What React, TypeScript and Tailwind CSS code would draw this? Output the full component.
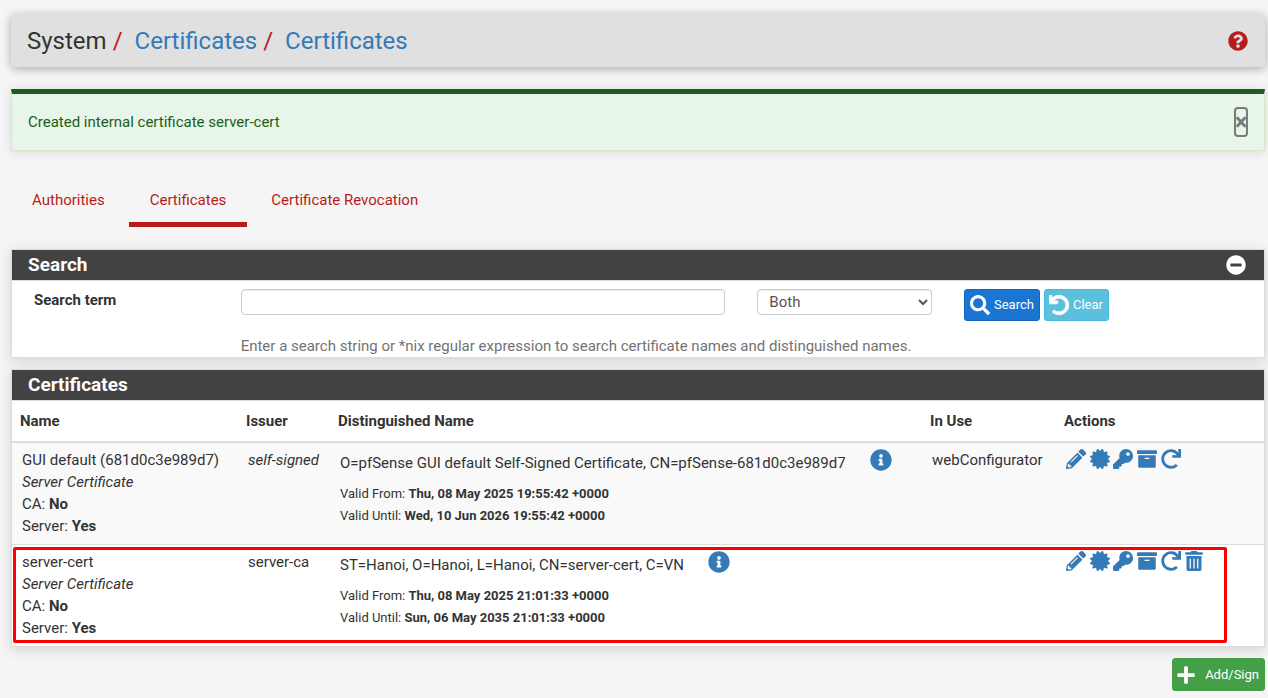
import type { ReactNode } from "react";
import {
  FaArchive,
  FaCertificate,
  FaInfoCircle,
  FaKey,
  FaMinusCircle,
  FaPencilAlt,
  FaPlus,
  FaQuestionCircle,
  FaRedo,
  FaSearch,
  FaTrashAlt,
  FaUndo,
} from "react-icons/fa";

type Certificate = {
  name: string;
  issuer: ReactNode;
  subject: string;
  from: string;
  until: string;
  inUse: string;
  deletable: boolean;
  highlighted: boolean;
};

const certificates: Certificate[] = [
  {
    name: "GUI default (681d0c3e989d7)",
    issuer: <i>self-signed</i>,
    subject: "O=pfSense GUI default Self-Signed Certificate, CN=pfSense-681d0c3e989d7",
    from: "Thu, 08 May 2025 19:55:42 +0000",
    until: "Wed, 10 Jun 2026 19:55:42 +0000",
    inUse: "webConfigurator",
    deletable: false,
    highlighted: false,
  },
  {
    name: "server-cert",
    issuer: "server-ca",
    subject: "ST=Hanoi, O=Hanoi, L=Hanoi, CN=server-cert, C=VN",
    from: "Thu, 08 May 2025 21:01:33 +0000",
    until: "Sun, 06 May 2035 21:01:33 +0000",
    inUse: "",
    deletable: true,
    highlighted: true,
  },
];

function Panel({ title, action, children }: { title: string; action?: ReactNode; children: ReactNode }) {
  return (
    <section className="border border-[#ddd] bg-white shadow-[0_3px_12px_rgba(0,0,0,0.14)]">
      <header className="flex h-[31px] items-center justify-between border-b border-[#ddd] bg-[#424242] pr-[18px] pl-4 text-white">
        <h2 className="text-[19px] leading-[30px] font-bold">{title}</h2>
        {action}
      </header>
      {children}
    </section>
  );
}

function ActionLink({ label, children }: { label: string; children: ReactNode }) {
  return (
    <>
      <a href="#" aria-label={label} className="text-[#337ab7]">
        {children}
      </a>{" "}
    </>
  );
}

function CertificateRow({ cert }: { cert: Certificate }) {
  return (
    <tr className="relative border-b border-[#ddd] align-top last:border-b-0 odd:bg-[#f9f9f9]">
      <td className="pt-[6px] pb-[7px] pl-[10px]">
        {cert.name}
        <br />
        <i>Server Certificate</i>
        <br />
        CA: <b>No</b>
        <br />
        Server: <b>Yes</b>
        {cert.highlighted && (
          <span className="pointer-events-none absolute top-[2px] right-[37px] bottom-[3px] left-px rounded-[2px] border-3 border-[#ff0000]" />
        )}
      </td>
      <td className="pt-[6px] pl-[10px]">{cert.issuer}</td>
      <td className="pt-[6px] pl-[10px]">
        <div className="flex gap-6">
          <span className="leading-7">{cert.subject}</span>
          <a href="#" aria-label="Certificate details" className="text-[#337ab7]">
            <FaInfoCircle size={22} />
          </a>
        </div>
        <div className="mt-[6px] text-[13px] leading-[22px]">
          Valid From: <b>{cert.from}</b>
          <br />
          Valid Until: <b>{cert.until}</b>
        </div>
      </td>
      <td className="pt-[6px] pl-[10px]">{cert.inUse}</td>
      <td className="pt-1 pl-[10px]">
        <ActionLink label="Edit certificate"><FaPencilAlt className="inline h-5 w-5" /></ActionLink>
        <ActionLink label="Export certificate"><FaCertificate className="inline h-5 w-5" /></ActionLink>
        <ActionLink label="Export key"><FaKey className="inline h-5 w-5" /></ActionLink>
        <ActionLink label="Export archive"><FaArchive className="inline h-5 w-5" /></ActionLink>
        <ActionLink label="Renew certificate"><FaRedo className="inline h-5 w-5" /></ActionLink>
        {cert.deletable && (
          <ActionLink label="Delete certificate"><FaTrashAlt className="inline h-5 w-[18px]" /></ActionLink>
        )}
      </td>
    </tr>
  );
}

export default function App() {
  return (
    <div className="min-h-screen bg-[#f5f5f5] pt-[14px] pr-[3px] pb-[7px] pl-[11px] font-[Roboto,sans-serif] text-[15px] leading-[22px] text-[#333]">
      <header className="flex h-[53px] items-center justify-between rounded-[4px] bg-[#e0e0e0] px-4 pr-[17px] shadow-[0_2px_10px_rgba(0,0,0,0.3)]">
        <nav aria-label="Breadcrumb">
          <ol className="flex text-[24px] leading-8">
            <li>System</li>
            <li className="flex gap-3 pl-[6px]">
              <span className="text-[#b71c1c]">/</span>
              <a href="#" className="text-[#337ab7]">Certificates</a>
            </li>
            <li className="flex gap-3 pl-[6px]">
              <span className="text-[#b71c1c]">/</span>
              <a href="#" className="text-[#337ab7]">Certificates</a>
            </li>
          </ol>
        </nav>
        <a href="#" aria-label="Help" className="text-[#b71c1c]">
          <FaQuestionCircle size={20} />
        </a>
      </header>

      <div
        role="alert"
        className="mt-[22px] flex h-[62px] items-center justify-between border border-t-5 border-[#d6e9c6] border-t-[#1b5e20] bg-[#e8f5e9] px-4 text-[#1b5e20] shadow-[0_1px_10px_rgba(0,0,0,0.12)]"
      >
        <span>Created internal certificate server-cert</span>
        <button
          type="button"
          aria-label="Close"
          className="flex h-[30px] w-[14px] items-center justify-center rounded-[4px] border-2 border-[#757d76] text-[23px] leading-none font-bold text-[#757d76]"
        >
          ×
        </button>
      </div>

      <nav aria-label="Certificate sections" className="mt-[22px] flex gap-[3px] text-[#b71c1c]">
        <a href="#" className="border-b-5 border-transparent px-[21px] pt-[16px] pb-[11px]">Authorities</a>
        <a href="#" aria-current="page" className="border-b-5 border-[#b71c1c] px-[21px] pt-[16px] pb-[11px]">Certificates</a>
        <a href="#" className="border-b-5 border-transparent px-[21px] pt-[16px] pb-[11px]">Certificate Revocation</a>
      </nav>

      <main className="mt-[22px] flex flex-col gap-[11px]">
        <Panel
          title="Search"
          action={
            <button type="button" aria-label="Collapse search">
              <FaMinusCircle size={20} />
            </button>
          }
        >
          <form className="grid grid-cols-12 px-[6px] pt-2">
            <label htmlFor="term" className="col-span-2 px-4 font-bold">Search term</label>
            <div className="col-span-5 px-4">
              <input
                id="term"
                type="text"
                aria-describedby="term-help"
                className="block h-[26px] w-full rounded-[4px] border border-[#ccc] bg-white px-3 shadow-[inset_0_1px_1px_rgba(0,0,0,0.075)]"
              />
            </div>
            <div className="col-span-2 px-4">
              <select
                aria-label="Search in"
                defaultValue="Both"
                className="block h-[26px] w-full rounded-[4px] border border-[#ccc] bg-white pl-[7px] text-[#555] shadow-[inset_0_1px_1px_rgba(0,0,0,0.075)]"
              >
                <option>Name</option>
                <option>Distinguished Name</option>
                <option>Both</option>
              </select>
            </div>
            <div className="col-span-3 flex gap-1 px-4 text-[13px] text-white">
              <button type="button" className="flex h-8 items-center gap-1 rounded-[3px] border border-[#1565c0] bg-[#1976d2] px-[5px]">
                <FaSearch size={20} />
                Search
              </button>
              <button type="button" className="flex h-8 items-center gap-1 rounded-[3px] border border-[#46b8da] bg-[#5bc0de] pr-[5px] pl-1">
                <FaUndo size={20} strokeWidth={24} />
                Clear
              </button>
            </div>
            <p id="term-help" className="col-span-10 col-start-3 mt-[14px] px-4 text-[#737373]">
              Enter a search string or *nix regular expression to search certificate names and distinguished names.
            </p>
          </form>
        </Panel>

        <Panel title="Certificates">
          <table className="w-full table-fixed border-collapse">
            <colgroup>
              <col className="w-[226px]" />
              <col className="w-[92px]" />
              <col />
              <col className="w-[134px]" />
              <col className="w-[208px]" />
            </colgroup>
            <thead>
              <tr className="h-[41px] border-b-2 border-[#ddd] text-left">
                <th className="pl-2">Name</th>
                <th className="pl-2">Issuer</th>
                <th className="pl-2">Distinguished Name</th>
                <th className="pl-2">In Use</th>
                <th className="pl-2">Actions</th>
              </tr>
            </thead>
            <tbody>
              {certificates.map((cert) => (
                <CertificateRow key={cert.name} cert={cert} />
              ))}
            </tbody>
          </table>
        </Panel>
      </main>

      <div className="mt-[11px] flex justify-end">
        <button type="button" className="flex h-[33px] items-center gap-[10px] rounded-[3px] border border-[#43a047] bg-[#43a047] pr-[5px] pl-1 text-[13px] text-white">
          <FaPlus className="h-5 w-[18px]" />
          Add/Sign
        </button>
      </div>
    </div>
  );
}
